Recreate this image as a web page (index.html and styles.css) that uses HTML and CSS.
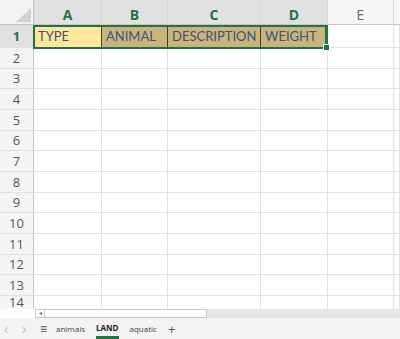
FILE: index.html
```html
<!DOCTYPE html>
<html>
<head>
<meta charset="utf-8">
<link rel="stylesheet" href="styles.css">
</head>
<body>
<div class="app">
  <div class="sheet">
    <div class="grid">
      <div class="corner"><span class="tri"></span></div>
      <div class="ch sel">A</div>
      <div class="ch sel">B</div>
      <div class="ch sel">C</div>
      <div class="ch sel">D</div>
      <div class="ch">E</div>
      <div class="ch fill"></div>

      <div class="rh sel">1</div>
      <div class="c r1 yellow">TYPE</div>
      <div class="c r1 tan">ANIMAL</div>
      <div class="c r1 tan">DESCRIPTION</div>
      <div class="c r1 tan last">WEIGHT</div>
      <div class="c"></div>
      <div class="c"></div>

      <div class="rh">2</div><div class="c"></div><div class="c"></div><div class="c"></div><div class="c"></div><div class="c"></div><div class="c"></div>
      <div class="rh">3</div><div class="c"></div><div class="c"></div><div class="c"></div><div class="c"></div><div class="c"></div><div class="c"></div>
      <div class="rh">4</div><div class="c"></div><div class="c"></div><div class="c"></div><div class="c"></div><div class="c"></div><div class="c"></div>
      <div class="rh">5</div><div class="c"></div><div class="c"></div><div class="c"></div><div class="c"></div><div class="c"></div><div class="c"></div>
      <div class="rh">6</div><div class="c"></div><div class="c"></div><div class="c"></div><div class="c"></div><div class="c"></div><div class="c"></div>
      <div class="rh">7</div><div class="c"></div><div class="c"></div><div class="c"></div><div class="c"></div><div class="c"></div><div class="c"></div>
      <div class="rh">8</div><div class="c"></div><div class="c"></div><div class="c"></div><div class="c"></div><div class="c"></div><div class="c"></div>
      <div class="rh">9</div><div class="c"></div><div class="c"></div><div class="c"></div><div class="c"></div><div class="c"></div><div class="c"></div>
      <div class="rh">10</div><div class="c"></div><div class="c"></div><div class="c"></div><div class="c"></div><div class="c"></div><div class="c"></div>
      <div class="rh">11</div><div class="c"></div><div class="c"></div><div class="c"></div><div class="c"></div><div class="c"></div><div class="c"></div>
      <div class="rh">12</div><div class="c"></div><div class="c"></div><div class="c"></div><div class="c"></div><div class="c"></div><div class="c"></div>
      <div class="rh">13</div><div class="c"></div><div class="c"></div><div class="c"></div><div class="c"></div><div class="c"></div><div class="c"></div>
      <div class="rh last-row">14</div><div class="c"></div><div class="c"></div><div class="c"></div><div class="c"></div><div class="c"></div><div class="c"></div>
    </div>
    <div class="selection"><span class="handle"></span></div>
  </div>
  <div class="hscroll">
    <div class="hs-pad"></div>
    <div class="hs-arrow">&#9666;</div>
    <div class="hs-thumb"></div>
    <div class="hs-track"></div>
  </div>
  <div class="tabs">
    <span class="nav dim">&lsaquo;</span>
    <span class="nav dim">&rsaquo;</span>
    <span class="menu">&#8801;</span>
    <span class="tab">animals</span>
    <span class="tab active">LAND</span>
    <span class="tab">aquatic</span>
    <span class="plus">+</span>
  </div>
</div>
</body>
</html>
```

FILE: styles.css
```css
* { box-sizing: border-box; }
html, body { margin: 0; padding: 0; background: #fff; }
body { width: 400px; height: 339px; overflow: hidden; font-family: "Open Sans", "Noto Sans", sans-serif; }

.app { display: flex; flex-direction: column; height: 339px; }

.sheet { position: relative; flex: 1; overflow: hidden; background: #fff; }

.grid {
  display: grid;
  grid-template-columns: 34px 68px 66px 93px 67px 66px 1fr;
  grid-template-rows: 25px 23px repeat(13, 20.67px);
}

.corner {
  background: #f3f3f3;
  border-right: 1px solid #c6c6c6;
  border-bottom: 1px solid #c6c6c6;
  display: flex;
  align-items: flex-end;
  justify-content: flex-end;
  padding: 0 2px 2px 0;
}
.tri {
  width: 0; height: 0;
  border-left: 15px solid transparent;
  border-bottom: 14px solid #d2d2d2;
}

.ch {
  background: #f7f7f7;
  border-right: 1px solid #d6d6d6;
  border-bottom: 1px solid #c6c6c6;
  display: flex;
  align-items: center;
  justify-content: center;
  padding-top: 4px;
  font-size: 14px;
  color: #666;
}
.ch.sel { background: #e1e1e1; color: #217346; font-weight: 700; }
.ch.fill { border-right: none; }

.rh {
  background: #f5f5f5;
  border-right: 1px solid #c6c6c6;
  border-bottom: 1px solid #e1e1e1;
  display: flex;
  align-items: center;
  justify-content: center;
  font-size: 13px;
  color: #555;
}
.rh.sel { background: #e1e1e1; color: #217346; font-weight: 700; }
.rh.last-row { align-items: flex-start; line-height: 13px; padding-top: 0; }

.c {
  border-right: 1px solid #e1e1e1;
  border-bottom: 1px solid #e1e1e1;
  font-family: "Lato", "Liberation Sans", sans-serif;
  font-size: 13px;
  color: #3f5080;
  display: flex;
  align-items: flex-end;
  padding: 0 0 3px 4px;
  white-space: nowrap;
  overflow: hidden;
}
.c.r1 { border-right: 1px solid #3c3c3c; }
.c.r1.last { border-right-color: #217346; }
.yellow { background: #ffe699; }
.tan { background: #c9b57a; }

.selection {
  position: absolute;
  left: 33px;
  top: 25px;
  width: 294px;
  height: 24px;
  border: 2px solid #217346;
}
.handle {
  position: absolute;
  right: -5px;
  bottom: -4px;
  width: 7px;
  height: 7px;
  background: #217346;
  border: 1px solid #fff;
}

.hscroll { height: 9px; display: flex; background: #e6e6e6; }
.hs-pad { width: 35px; background: #fff; }
.hs-arrow {
  width: 10px;
  background: #fff;
  border: 1px solid #c8c8c8;
  font-size: 6px;
  line-height: 7px;
  color: #666;
  text-align: center;
}
.hs-thumb { width: 162px; background: #fff; border: 1px solid #c8c8c8; border-left: none; }
.hs-track { flex: 1; }

.tabs {
  height: 21px;
  background: #f3f3f3;
  display: flex;
  align-items: center;
  font-size: 8px;
  color: #444;
  padding-left: 4px;
}
.nav { width: 18px; font-size: 14px; line-height: 21px; }
.dim { color: #c0c0c0; }
.menu { font-size: 12px; color: #555; margin-left: 0; width: 16px; }
.tab { height: 21px; line-height: 21px; margin-right: 11px; }
.tab.active { font-weight: 700; color: #222; border-bottom: 3px solid #217346; line-height: 19px; }
.plus { font-size: 13px; color: #555; }
```
